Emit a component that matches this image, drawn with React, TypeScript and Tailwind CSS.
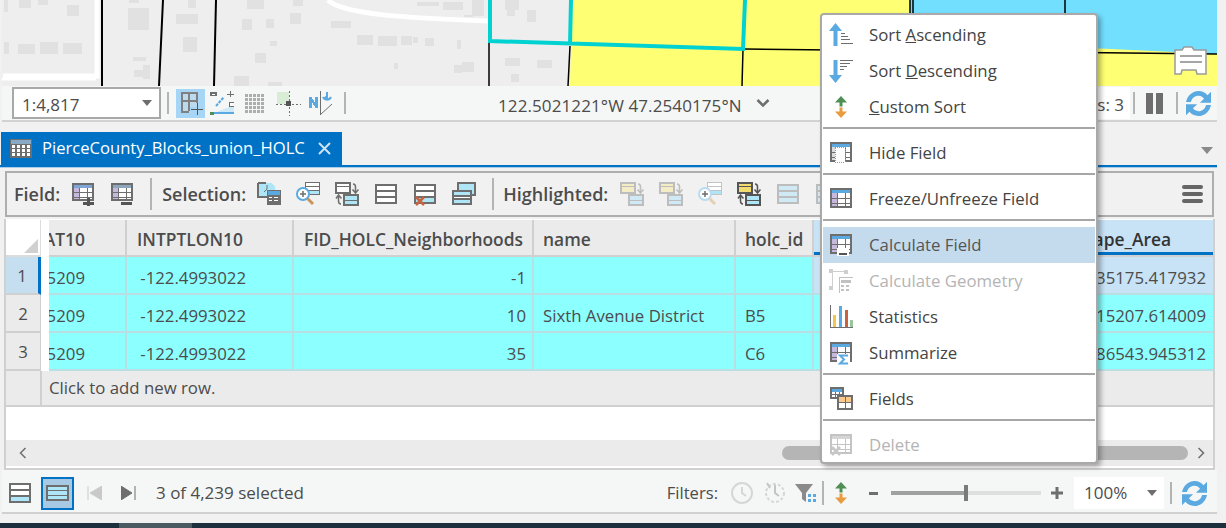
import type { ReactNode } from "react";

const GRAY = "#6e6e6e";
const BLUE = "#5aa9e0";
const CYAN = "#aee6f8";

function Ico({ children, w = 24, h = 24, className = "" }: { children: ReactNode; w?: number; h?: number; className?: string }) {
  return (
    <svg width={w} height={h} viewBox={`0 0 ${w} ${h}`} fill="none" className={`shrink-0 ${className}`} shapeRendering="crispEdges">
      {children}
    </svg>
  );
}

// little attribute table, used by most of the field icons
function Tbl({ x = 1, y = 1, w = 22, h = 20, head = BLUE, stroke = GRAY, cell }: { x?: number; y?: number; w?: number; h?: number; head?: string; stroke?: string; cell?: string }) {
  const cw = w / 3;
  const rh = (h - 5) / 3;
  return (
    <g>
      <rect x={x} y={y} width={w} height={h} fill="#fff" />
      {cell && <rect x={x + 1} y={y + 5} width={cw} height={h - 6} fill={cell} />}
      <rect x={x} y={y} width={w} height={5} fill={head} />
      <rect x={x + 1} y={y + 1} width={w - 2} height={h - 2} stroke={stroke} strokeWidth={2} />
      {[1, 2].map((i) => (
        <rect key={i} x={x + Math.round(cw * i)} y={y + 5} width={1} height={h - 5} fill={stroke} />
      ))}
      {[1, 2].map((i) => (
        <rect key={i} x={x} y={y + 5 + Math.round(rh * i)} width={w} height={1} fill={stroke} />
      ))}
    </g>
  );
}

// table rows drawing (selection set)
function RowsShape({ x = 1, y = 2, w = 22, h = 20, stroke = GRAY, fills = ["#fff", "#fff", "#fff"] }: { x?: number; y?: number; w?: number; h?: number; stroke?: string; fills?: string[] }) {
  const rh = (h - 4) / 3;
  return (
    <g>
      {fills.map((c, i) => (
        <rect key={i} x={x + 2} y={y + 2 + Math.round(rh * i)} width={w - 4} height={Math.round(rh)} fill={c} />
      ))}
      <rect x={x + 1} y={y + 1} width={w - 2} height={h - 2} stroke={stroke} strokeWidth={2} />
      {[1, 2].map((i) => (
        <rect key={i} x={x + 2} y={y + 2 + Math.round(rh * i) - 1} width={w - 4} height={2} fill={stroke} />
      ))}
    </g>
  );
}

function Rows(props: { stroke?: string; fills?: string[] }) {
  return (
    <Ico>
      <RowsShape {...props} />
    </Ico>
  );
}

function Refresh() {
  return (
    <svg width="25" height="25" viewBox="3 3 18 18" className="shrink-0" fill="none">
      <path d="M3 11C4 6 8 3 12 3c3 0 5 1.300 6.500 3L21 3.500V11.500h-8l3-3C15 7.300 13.700 6.500 12 6.500c-2.700 0-4.800 1.800-5.500 4.500z" fill={BLUE} />
      <path d="M21 13c-1 5-5 8-9 8-3 0-5-1.300-6.500-3L3 20.500V12.500h8l-3 3C9 16.700 10.300 17.500 12 17.500c2.700 0 4.800-1.800 5.500-4.500z" fill={BLUE} />
    </svg>
  );
}

function GreenOrange() {
  return (
    <Ico w={14} h={24}>
      <g shapeRendering="auto">
        <path d="M7 1L13 7.500H8.500V11.500H5.500V7.500H1z" fill="#4f8f55" />
        <path d="M7 23L13 16.500H8.500V12.500H5.500V16.500H1z" fill="#e89b3f" />
      </g>
    </Ico>
  );
}

function SortAsc() {
  return (
    <Ico>
      <path d="M6.500 0L13 8H8.500V23H4.500V8H0z" fill={BLUE} shapeRendering="auto" />
      <path d="M12 10h4v1h-4zM12 13h7v1h-7zM12 16h9v1h-9zM12 20h12v1H12z" fill={GRAY} />
    </Ico>
  );
}

function SortDesc() {
  return (
    <Ico>
      <path d="M6.500 24L13 16H8.500V1H4.500V16H0z" fill={BLUE} shapeRendering="auto" />
      <path d="M11 1h13v1H11zM11 4h10v1H11zM11 7h7v1h-7zM11 10h4v1h-4z" fill={GRAY} />
    </Ico>
  );
}

function Stats() {
  return (
    <Ico>
      <path d="M1 0v23h23v-1H2V0z" fill={GRAY} />
      <rect x="4" y="10" width="3" height="12" fill="#ecc94a" />
      <rect x="10" y="1" width="3" height="21" fill={BLUE} />
      <rect x="16" y="5" width="3" height="17" fill="#c8623f" />
      <rect x="21" y="15" width="3" height="7" fill="#9cc49a" />
    </Ico>
  );
}

function FieldsIcon() {
  return (
    <Ico>
      <Tbl x={1} y={0} w={14} h={12} head={BLUE} />
      <rect x="8" y="8" width="16" height="15" fill="#fff" />
      <rect x="9" y="9" width="14" height="13" stroke={GRAY} strokeWidth="2" />
      <rect x="10" y="10" width="12" height="5" fill="#fbc98a" />
      <rect x="8" y="15" width="16" height="1" fill={GRAY} />
      <rect x="16" y="8" width="1" height="15" fill={GRAY} />
    </Ico>
  );
}

function SelectAttr() {
  return (
    <Ico>
      <path d="M1 1H14L18 5V14H1z" fill={CYAN} />
      <path d="M1 1H9M1 1V15H12" stroke={GRAY} strokeWidth="2" />
      <path d="M10 3v4l-3 3" stroke={GRAY} shapeRendering="auto" />
      <rect x="10" y="8" width="14" height="15" fill={GRAY} />
      <rect x="11" y="9" width="12" height="4" fill={BLUE} />
      <path d="M12 15h3v1h-3zM17 15h4v1h-4zM12 18h3v1h-3zM17 18h4v1h-4z" fill="#fff" />
    </Ico>
  );
}

function ZoomSel({ glass = BLUE, handle = "#c8965a", rows = GRAY }: { glass?: string; handle?: string; rows?: string }) {
  return (
    <Ico>
      <rect x="9.500" y="0.500" width="14" height="12" fill="#fff" stroke={rows} />
      <path d="M10 4.500h13M10 8.500h13" stroke={rows} />
      <path d="M10 9h13v3H10z" fill={CYAN} />
      <g shapeRendering="auto">
        <circle cx="7" cy="12" r="6" fill="#fff" stroke={glass} strokeWidth="2" />
        <path d="M4 12h6M7 9v6" stroke={GRAY} strokeWidth="1.500" />
        <path d="M11.500 16.500L17 22" stroke={handle} strokeWidth="3" />
      </g>
    </Ico>
  );
}

function Switch({ top = CYAN, bottom = CYAN, stroke = GRAY, mono = false }: { top?: string; bottom?: string; stroke?: string; mono?: boolean }) {
  return (
    <Ico>
      <rect x="1" y="1" width="14" height="10" fill={top} stroke={stroke} strokeWidth="1.500" />
      <path d="M1 4.500h14" stroke={stroke} />
      <rect x="9" y="13" width="14" height="10" fill={bottom} stroke={stroke} strokeWidth="1.500" />
      <path d="M9 18h14" stroke={stroke} />
      <g shapeRendering="auto">
        <path d="M18 2c2 0 2.500 1.500 2.500 3v5M17.500 7.500l3 3.500 3-3.500" stroke={stroke} strokeWidth="1.500" />
        {!mono && <path d="M6 22c-2 0-2.500-1.500-2.500-3v-5M1 16.500L3.500 13l3 3.500" stroke={stroke} strokeWidth="1.500" />}
      </g>
    </Ico>
  );
}

function DelSel() {
  return (
    <Ico>
      <RowsShape fills={["#fff", "#fff", CYAN]} />
      <path d="M3 15l8 8M11 15l-8 8" stroke="#c8623f" strokeWidth="2.500" shapeRendering="auto" />
    </Ico>
  );
}

function CopySel({ stroke = GRAY }: { stroke?: string }) {
  return (
    <Ico>
      <rect x="6" y="1" width="17" height="12" fill={CYAN} stroke={stroke} strokeWidth="1.500" />
      <RowsShape x={0} y={8} w={20} h={15} fills={[CYAN, "#fff", CYAN]} stroke={stroke} />
    </Ico>
  );
}

function HlSwitch({ zoomed }: { zoomed?: boolean }) {
  return zoomed ? <ZoomSel glass="#b7dcf2" handle="#e4d0b4" rows="#c4c4c4" /> : <Switch top="#f3ecc4" bottom="#cfe9f5" stroke="#bdbdbd" mono />;
}

function Sep({ h = 32, className = "" }: { h?: number; className?: string }) {
  return <div className={`w-[2px] bg-[#b4b4b4] shrink-0 ${className}`} style={{ height: h }} />;
}

function Caret({ className = "" }: { className?: string }) {
  return <div className={`w-0 h-0 border-x-[5px] border-x-transparent border-t-[6px] border-t-[#6e6e6e] ${className}`} />;
}

function MapView() {
  const buildings = [
    [2, 0, 4, 12], [17, 0, 12, 8], [36, 0, 10, 5], [65, 5, 12, 11], [2, 42, 5, 12], [16, 44, 17, 10], [38, 42, 18, 12], [61, 43, 19, 11],
    [126, 8, 21, 22], [127, 0, 10, 3], [174, 14, 22, 10], [181, 37, 14, 15], [131, 57, 13, 4], [141, 65, 7, 14], [132, 70, 10, 7], [186, 0, 8, 8],
    [240, 19, 10, 11], [264, 19, 8, 9], [245, 0, 17, 9], [291, 0, 10, 6], [288, 13, 11, 11], [329, 21, 20, 7], [355, 35, 16, 10], [376, 36, 19, 10],
    [399, 36, 11, 9], [268, 41, 7, 5], [253, 53, 11, 10], [232, 76, 15, 10], [266, 82, 14, 4], [392, 63, 4, 6],
    [411, 37, 5, 6], [423, 38, 9, 8], [455, 40, 4, 9], [441, 2, 20, 8], [470, 0, 12, 16], [462, 15, 9, 2], [415, 2, 22, 4], [503, 0, 14, 10], [525, 10, 9, 12],
    [505, 6, 8, 10], [460, 62, 12, 10], [503, 58, 15, 8], [535, 60, 15, 8], [509, 74, 8, 8], [452, 65, 8, 8],
  ];
  return (
    <svg width="1215" height="86" viewBox="0 0 1215 86" className="block shrink-0">
      <rect width="1215" height="86" fill="#eeeeee" />
      {buildings.map(([x, y, w, h], i) => (
        <rect key={i} x={x} y={y} width={w} height={h} fill="#e1e1e1" />
      ))}
      <path d="M95 0V76H1" stroke="#ffffff" strokeWidth="5" fill="none" />
      <path d="M0 79H94" stroke="#ffffff" strokeWidth="3" fill="none" />
      <path d="M326 0C340 14 400 18 488 21" stroke="#ffffff" strokeWidth="5" fill="none" />
      <path d="M570 0H1215V86H568z" fill="#ffff73" />
      <path d="M908 0H1215V54L1066 47L908 42z" fill="#73dfff" />
      <path d="M100 0V86M161 0L157 86M214 0L212 86" stroke="#000" strokeWidth="2" fill="none" />
      <path d="M487 41V86M568 46L566 86M741 49L740 86M743 49L1215 54M1063 0V14M908 0V14M911 0V14" stroke="#000" strokeWidth="1.500" fill="none" />
      <path d="M488 0V41L741 49L743 0M569 0L568 45" stroke="#00d2d2" strokeWidth="4" fill="none" />
      <path d="M1174 50h7l2-3h8l2 3h12v24h-9l-1-4h-14l-1 4h-6z" fill="#ffffff" stroke="#9a9a9a" strokeWidth="1.500" transform="translate(-1,0)" />
      <path d="M1178 56h22M1178 62h22" stroke="#888" strokeWidth="1.500" />
    </svg>
  );
}

function StatusBar() {
  return (
    <div className="h-[36px] shrink-0 bg-[#f5f7f6] border-b-2 border-[#d2d2d2] flex items-center text-[#4c4c4c] text-[17px]">
      <div className="ml-[10px] w-[149px] h-[32px] bg-white border-2 border-[#a8a8a8] flex items-center justify-between pl-[8px] pr-[7px] shrink-0">
        <span className="pt-[3px]">1:4,817</span>
        <Caret />
      </div>
      <Sep h={22} className="ml-[6px]" />
      <div className="ml-[7px] w-[29px] h-[29px] bg-[#a6d5f5] flex items-center justify-center shrink-0">
        <Ico>
          <path d="M2 1h17v15H11v6H2z" fill="#bcd9ee" />
          <path d="M2 2h17M3 1v20M2 21h8M10 3v17M3 10h15M18 1v11" stroke="#808080" strokeWidth="2" />
          <path d="M12 18h12M18 12v12" stroke="#555" />
        </Ico>
      </div>
      <div className="ml-[5px] shrink-0">
        <Ico>
          <rect x="0" y="1" width="7" height="4" fill={GRAY} />
          <rect x="2" y="2.500" width="3" height="1" fill="#fff" />
          <path d="M17 3h7M20.500 0v6" stroke={GRAY} />
          <path d="M4 22L24 14V22z" fill="#cfe9f7" />
          <path d="M4 22H24" stroke={BLUE} strokeWidth="2" />
          <rect x="19" y="11" width="5" height="4" fill="#fff" stroke={GRAY} />
          <path d="M6 15L14 6" stroke={BLUE} strokeWidth="2" strokeDasharray="3 1" shapeRendering="auto" />
          <rect x="0" y="21" width="4" height="4" fill="#4f8f55" />
        </Ico>
      </div>
      <div className="ml-[11px] shrink-0">
        <Ico w={19} h={19}>
          <rect width="19" height="19" fill="#adadad" />
          {[3, 7, 11, 15].map((p) => (
            <g key={p}>
              <rect x={p} width="1" height="19" fill="#f5f7f6" />
              <rect y={p} width="19" height="1" fill="#f5f7f6" />
            </g>
          ))}
        </Ico>
      </div>
      <div className="ml-[12px] shrink-0">
        <Ico w={25} h={25}>
          <rect x="1" y="1" width="12" height="12" fill="#d8ecd6" />
          <path d="M13 0v25M0 13h25" stroke="#6e6e6e" strokeDasharray="2 2" />
          <rect x="10" y="10" width="5" height="5" fill="#555" />
        </Ico>
      </div>
      <div className="ml-[7px] shrink-0">
        <Ico w={26} h={25}>
          <path d="M1 17V6H3.500L7 12V6H10V17H7.500L4 11V17z" fill={BLUE} />
          <path d="M12 0V24" stroke={GRAY} />
          <path d="M12 24L24 13" stroke={GRAY} shapeRendering="auto" />
          <path d="M19 1V8M15 6c1 3 6 4 8 0M17 7l2-2" stroke={BLUE} strokeWidth="2" shapeRendering="auto" />
        </Ico>
      </div>
      <Sep h={22} className="ml-[10px]" />
      <span className="ml-[152px] mt-[6px] whitespace-nowrap tracking-[0.1px]">122.5021221°W 47.2540175°N</span>
      <svg width="14" height="10" viewBox="0 0 14 10" fill="none" className="ml-[14px] shrink-0">
        <path d="M1.500 2L7 7.500L12.500 2" stroke={GRAY} strokeWidth="2.500" />
      </svg>
      <div className="ml-auto flex items-center shrink-0">
        <span className="bg-white h-[32px] flex items-center pl-[3px] pr-[6px] pt-[3px] whitespace-nowrap">Selected Features: 3</span>
        <Sep h={22} className="ml-[3px]" />
        <div className="ml-[11px] w-[7px] h-[21px] bg-[#6e6e6e]" />
        <div className="ml-[3px] w-[7px] h-[21px] bg-[#6e6e6e]" />
        <Sep h={22} className="ml-[13px]" />
        <div className="ml-[8px] mr-[6px]">
          <Refresh />
        </div>
      </div>
    </div>
  );
}

function TabStrip() {
  return (
    <>
      <div className="mt-[10px] h-[33px] shrink-0 flex items-stretch">
        <div className="ml-px w-[341px] bg-[#0072c6] flex items-center text-white text-[16.6px] pl-[9px]">
          <Ico w={22} h={19}>
            <rect x="0" y="0" width="22" height="19" fill="#6e6e6e" />
            <rect x="1" y="1" width="20" height="4" fill="#8aa9c4" />
            {[2, 7, 12, 17].map((x) =>
              [6, 10, 14].map((y) => <rect key={`${x}-${y}`} x={x} y={y} width="3" height="3" fill="#fff" />),
            )}
          </Ico>
          <span className="ml-[10px] whitespace-nowrap">PierceCounty_Blocks_union_HOLC</span>
          <svg width="13" height="13" viewBox="0 0 13 13" className="ml-[13px] shrink-0">
            <path d="M1 1L12 12M12 1L1 12" stroke="#cfe3f3" strokeWidth="2" />
          </svg>
        </div>
        <div className="ml-auto mr-[13px] self-center mt-[3px]">
          <Caret className="border-x-[6px] border-t-[7px] border-t-[#8a8a8a]" />
        </div>
      </div>
      <div className="h-[3px] w-[1217px] shrink-0 bg-[#0072c6] border-b border-[#a9cde8]" />
    </>
  );
}

function Toolbar() {
  const label = "font-semibold text-[18px] text-[#4c4c4c] whitespace-nowrap";
  return (
    <div className="mt-[3px] ml-[5px] w-[1209px] h-[46px] shrink-0 border-y-2 border-x-2 border-[#aeaeae] bg-[#f1f1f1] flex items-center pl-[7px]">
      <span className={label}>Field:</span>
      <div className="ml-[11px] flex gap-[15px]">
        <Ico>
          <Tbl y={1} h={18} head="#7fa6d6" cell="#c6b9dd" />
          <path d="M12 21h11M17.500 16v8" stroke="#555" strokeWidth="3" />
        </Ico>
        <Ico>
          <Tbl y={1} h={18} head="#8fa7bd" cell="#c6b9dd" />
          <path d="M11 21h11" stroke="#555" strokeWidth="3" />
        </Ico>
      </div>
      <Sep h={32} className="ml-[16px]" />
      <span className={`${label} ml-[10px]`}>Selection:</span>
      <div className="ml-[11px] flex gap-[15px]">
        <SelectAttr />
        <ZoomSel />
        <Switch top="#fff" bottom={CYAN} />
        <Rows />
        <DelSel />
        <CopySel />
      </div>
      <Sep h={32} className="ml-[16px]" />
      <span className={`${label} ml-[9px]`}>Highlighted:</span>
      <div className="ml-[12px] flex gap-[15px]">
        <HlSwitch />
        <HlSwitch />
        <HlSwitch zoomed />
        <Switch top="#f2dc72" bottom={CYAN} stroke="#555" />
        <Rows stroke="#bdbdbd" fills={["#cfe9f5", "#cfe9f5", "#cfe9f5"]} />
        <Rows stroke="#bdbdbd" fills={["#cfe9f5", "#cfe9f5", "#cfe9f5"]} />
      </div>
      <div className="ml-auto mr-[9px] flex flex-col gap-[3px]">
        <div className="w-[21px] h-[4px] rounded-full bg-[#666]" />
        <div className="w-[21px] h-[4px] rounded-full bg-[#666]" />
        <div className="w-[21px] h-[4px] rounded-full bg-[#666]" />
      </div>
    </div>
  );
}

const colClass = [
  "w-[78px] justify-end pr-[40px]",
  "w-[167px] justify-end pr-[46px]",
  "w-[240px] justify-end pr-[6px]",
  "w-[202px] pl-[9px]",
  "w-[78px] pl-[9px]",
  "w-[399px] justify-end pr-[7px]",
];

const rowsData = [
  ["5209", "-122.4993022", "-1", "", "", "735175.417932"],
  ["5209", "-122.4993022", "10", "Sixth Avenue District", "B5", "415207.614009"],
  ["5209", "-122.4993022", "35", "", "C6", "786543.945312"],
];

function DataTable() {
  const headers = ["AT10", "INTPTLON10", "FID_HOLC_Neighborhoods", "name", "holc_id"];
  return (
    <div className="mt-[2px] ml-[4px] w-[1211px] h-[251px] shrink-0 border-x-2 border-b-2 border-[#d0d0d0] bg-white pt-px text-[16.8px] text-[#4c4c4c] flex flex-col">
      <div className="h-[37px] flex shrink-0 text-[17.4px]">
        <div className="w-[35px] border-b-2 border-r border-[#dcdcdc] relative bg-white">
          <div className="absolute right-[2px] bottom-[2px] w-0 h-0 border-l-[14px] border-l-transparent border-b-[14px] border-b-[#d0d0d0]" />
        </div>
        <div className="w-[8px]" />
        {headers.map((h, i) => (
          <div key={h} className={`flex items-center pt-[3px] overflow-hidden whitespace-nowrap bg-[#ebebeb] border-r-2 border-b-2 border-[#d0d0d0] font-semibold ${i === 1 ? "w-[167px] pl-[10px]" : i === 2 ? "w-[240px] pl-[10px]" : colClass[i]}`}>
            {h}
          </div>
        ))}
        <div className="w-[399px] flex items-center justify-end pt-[3px] pr-[42px] font-semibold bg-[#c8e2f6] border-b-2 border-[#d0d0d0] relative whitespace-nowrap text-[#333]">
          Shape_Area
          <div className="absolute left-0 right-0 bottom-0 h-[3px] bg-[#0072c6]" />
        </div>
      </div>
      {rowsData.map((row, r) => (
        <div key={r} className="h-[38px] flex shrink-0">
          <div className={`w-[35px] flex items-center justify-center pt-[2px] border-b-2 border-[#d0d0d0] ${r === 0 ? "bg-[#c6dff0] border-r-[3px] border-r-[#0072c6]" : "bg-[#ebebeb] border-r border-r-[#d0d0d0]"}`}>
            {r + 1}
          </div>
          <div className="w-[8px]" />
          {row.map((v, c) => (
            <div key={c} className={`flex items-center pt-[6px] overflow-hidden whitespace-nowrap border-b-2 border-[#b9dfe4] ${c === 5 && r === 0 ? "bg-[#c8e2f6]" : "bg-[#8cffff]"} ${c < 5 ? "border-r-2" : ""} ${colClass[c]}`}>
              {v}
            </div>
          ))}
        </div>
      ))}
      <div className="h-[36px] flex shrink-0 bg-[#ebebeb] border-b-2 border-[#d0d0d0]">
        <div className="w-[36px] border-r-2 border-[#d0d0d0]" />
        <span className="ml-[7px] self-center">Click to add new row.</span>
      </div>
      <div className="h-[33px] shrink-0" />
      <div className="h-[26px] shrink-0 bg-[#ebebeb] flex items-center">
        <svg width="8" height="12" viewBox="0 0 8 12" className="ml-[13px] shrink-0">
          <path d="M6.500 1L1.500 6L6.500 11" stroke="#6e6e6e" strokeWidth="1.500" fill="none" />
        </svg>
        <div className="ml-[755px] w-[406px] h-[14px] rounded-full bg-[#b5b5b5]" />
        <svg width="8" height="12" viewBox="0 0 8 12" className="ml-[9px] shrink-0">
          <path d="M1.500 1L6.500 6L1.500 11" stroke="#6e6e6e" strokeWidth="1.500" fill="none" />
        </svg>
      </div>
    </div>
  );
}

function BottomBar() {
  return (
    <div className="ml-[2px] w-[1215px] h-[44px] shrink-0 pt-[4px] bg-[#f5f7f6] border-b-2 border-[#d0d0d0] flex items-center text-[17px] text-[#4c4c4c]">
      <div className="ml-[6px]">
        <Rows fills={["#fff", "#fff", CYAN]} />
      </div>
      <div className="ml-[9px] w-[33px] h-[33px] bg-[#a8c9e4] border-2 border-[#0072c6] flex items-center justify-center shrink-0">
        <Ico w={23} h={16}>
          <rect x="1" y="1" width="21" height="14" fill={CYAN} stroke={GRAY} strokeWidth="2" />
          <path d="M1 5.500h21M1 10.500h21" stroke={GRAY} />
        </Ico>
      </div>
      <svg width="15" height="14" viewBox="0 0 15 14" className="ml-[13px] shrink-0">
        <path d="M1 0v14M15 0v14L3 7z" fill="#c9c9c9" stroke="#c9c9c9" />
      </svg>
      <svg width="15" height="14" viewBox="0 0 15 14" className="ml-[19px] shrink-0">
        <path d="M14 0v14M0 0v14L11 7z" fill="#6e6e6e" stroke="#6e6e6e" />
      </svg>
      <span className="ml-[20px] whitespace-nowrap">3 of 4,239 selected</span>
      <span className="ml-auto whitespace-nowrap text-[16.6px]">Filters:</span>
      <svg width="24" height="24" viewBox="0 0 24 24" fill="none" className="ml-[12px] shrink-0">
        <circle cx="12" cy="12" r="10" stroke="#d6d6d6" strokeWidth="2" />
        <path d="M12 6v6l4 3" stroke="#d6d6d6" strokeWidth="2" />
      </svg>
      <svg width="24" height="24" viewBox="0 0 24 24" fill="none" className="ml-[9px] shrink-0">
        <circle cx="12" cy="12" r="9" stroke="#d6d6d6" strokeWidth="2" strokeDasharray="3 2" />
        <path d="M12 4v8l4 3M4 2l3 5" stroke="#c4c4c4" strokeWidth="2" />
      </svg>
      <svg width="24" height="24" viewBox="0 0 24 24" className="ml-[7px] shrink-0">
        <path d="M1 3H19L12 12V21L8 18V12z" fill="#8a8a8a" />
        <path d="M14 13h3v3h-3zM19 13h3v3h-3zM14 18h3v3h-3zM19 18h3v3h-3z" fill={BLUE} />
      </svg>
      <Sep h={24} className="ml-[4px]" />
      <div className="ml-[10px]">
        <GreenOrange />
      </div>
      <div className="ml-[21px] w-[9px] h-[3px] bg-[#6e6e6e]" />
      <div className="ml-[13px] w-[150px] h-[4px] bg-[#dfdfdf] relative">
        <div className="w-[75px] h-full bg-[#a0a0a0]" />
        <div className="absolute left-[73px] top-[-6px] w-[4px] h-[16px] bg-[#7a7a7a]" />
      </div>
      <svg width="12" height="12" viewBox="0 0 12 12" className="ml-[10px] shrink-0">
        <path d="M0 6H12M6 0V12" stroke="#6e6e6e" strokeWidth="3" />
      </svg>
      <div className="ml-[11px] w-[90px] h-[32px] bg-white flex items-center justify-between pl-[10px] pr-[7px] shrink-0">
        <span>100%</span>
        <Caret className="border-x-[4px] border-t-[5px]" />
      </div>
      <Sep h={22} className="ml-[6px]" />
      <div className="ml-[10px] mr-[10px]">
        <Refresh />
      </div>
    </div>
  );
}

function MenuItem({ icon, children, active, disabled }: { icon: ReactNode; children: ReactNode; active?: boolean; disabled?: boolean }) {
  return (
    <div className={`h-[36px] mx-px flex items-center ${active ? "bg-[#c4dbee]" : ""} ${disabled ? "text-[#b4b4b4]" : active ? "text-[#555]" : "text-[#444]"}`}>
      <div className={`w-[46px] pl-[6px] shrink-0 flex items-center ${disabled ? "opacity-40" : ""}`}>{icon}</div>
      <span className="whitespace-nowrap">{children}</span>
    </div>
  );
}

function MenuSep() {
  return <div className="h-[2px] mx-px bg-[#a6a6a6] mt-[2px] mb-[6px]" />;
}

function ContextMenu() {
  return (
    <div className="absolute left-[820px] top-[13px] w-[278px] h-[451px] bg-white border-2 border-[#a9a9a9] rounded-[4px] shadow-[3px_3px_5px_rgba(0,0,0,0.3)] pt-[2px] text-[16.8px]">
      <MenuItem icon={<SortAsc />}>
        Sort <u>A</u>scending
      </MenuItem>
      <MenuItem icon={<SortDesc />}>
        Sort <u>D</u>escending
      </MenuItem>
      <MenuItem icon={<div className="pl-[5px]"><GreenOrange /></div>}>
        <u>C</u>ustom Sort
      </MenuItem>
      <MenuSep />
      <MenuItem icon={<Ico><Tbl cell="#dcdcdc" /><rect x="6" y="6" width="10" height="15" fill="#fff" stroke="#999" strokeDasharray="1 1" /></Ico>}>Hide Field</MenuItem>
      <MenuSep />
      <MenuItem icon={<Ico><Tbl cell="#c6b9dd" /></Ico>}>Freeze/Unfreeze Field</MenuItem>
      <MenuSep />
      <MenuItem active icon={<Ico><Tbl cell="#c6b9dd" /><rect x="8" y="15" width="12" height="8" fill="#fff" /><path d="M10 21h8" stroke="#555" strokeWidth="2" /></Ico>}>
        Calculate Field
      </MenuItem>
      <MenuItem disabled icon={<Ico><path d="M3 2L17 3M3 2V19" stroke="#888" /><rect x="0" y="0" width="4" height="4" fill="#888" /><rect x="15" y="1" width="4" height="4" fill="#888" /><rect x="0" y="17" width="4" height="4" fill="#888" /><rect x="10" y="8" width="14" height="16" fill="#fff" stroke="#666" /><path d="M12 11h10v3H12zM12 16h3v2h-3zM17 16h3v2h-3zM12 20h3v2h-3zM17 20h3v2h-3z" fill="#666" /></Ico>}>
        Calculate Geometry
      </MenuItem>
      <MenuItem icon={<Stats />}>Statistics</MenuItem>
      <MenuItem icon={<Ico><Tbl cell="#c6b9dd" /><rect x="8" y="13" width="13" height="11" fill="#fff" /><path d="M19 14.500H11L15 18.500L11 22.500H19" stroke={BLUE} strokeWidth="2" shapeRendering="auto" /></Ico>}>Summarize</MenuItem>
      <MenuSep />
      <MenuItem icon={<FieldsIcon />}>Fields</MenuItem>
      <MenuSep />
      <MenuItem disabled icon={<Ico><Tbl head="#999" /><path d="M3 14l8 8M11 14l-8 8" stroke="#777" strokeWidth="2.500" shapeRendering="auto" /></Ico>}>Delete</MenuItem>
    </div>
  );
}

export default function App() {
  return (
    <div className="relative w-[1226px] h-[528px] overflow-hidden bg-[#f1f1f1] flex flex-col font-['Open_Sans',sans-serif]">
      <div className="ml-[2px] w-[1215px] flex flex-col shrink-0">
        <MapView />
        <StatusBar />
      </div>
      <TabStrip />
      <Toolbar />
      <DataTable />
      <BottomBar />
      <div className="mt-auto h-[5px] shrink-0 bg-[#1c2f3d] flex">
        <div className="ml-[119px] w-[73px] bg-[#4b5a61]" />
      </div>
      <ContextMenu />
    </div>
  );
}
